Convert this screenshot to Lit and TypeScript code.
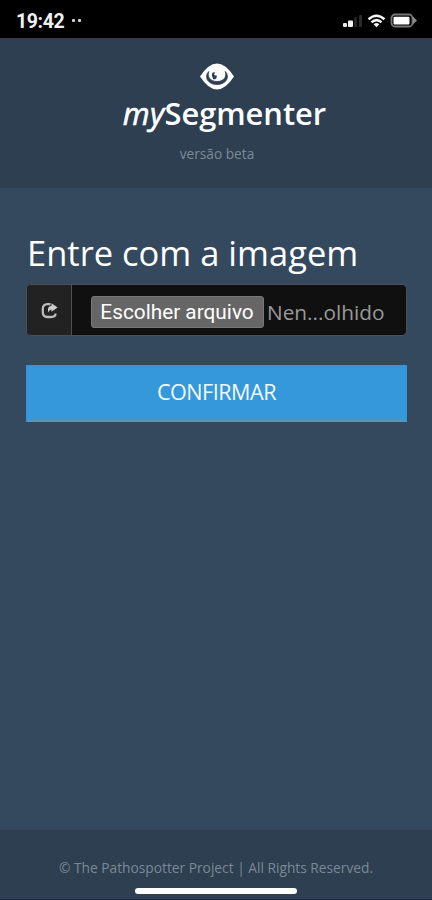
import { LitElement, html, css } from "lit";
import { customElement } from "lit/decorators.js";

@customElement("status-bar")
class StatusBar extends LitElement {
  static styles = css`
    :host {
      display: flex;
      align-items: center;
      justify-content: space-between;
      height: 38px;
      box-sizing: border-box;
      padding: 4px 15px 0 16px;
      background: #000;
      color: #f1f1f1;
    }
    .left { display: flex; align-items: center; gap: 8px; }
    .time { font: 700 19.5px/24px Roboto, sans-serif; letter-spacing: -0.4px; padding-top: 2px; }
    .dots { display: flex; gap: 3px; padding-bottom: 1px; }
    .dots i { width: 3px; height: 3px; background: #d4d4d4; border-radius: 1px; }
    svg { display: block; }
  `;
  render() {
    return html`
      <div class="left">
        <span class="time">19:42</span>
        <span class="dots"><i></i><i></i></span>
      </div>
      <svg width="75" height="16" viewBox="0 0 75 16">
        <rect x="1" y="10" width="4" height="4" rx="1" fill="#e8e8e8" />
        <rect x="6" y="7.500" width="5" height="6.500" rx="1" fill="#f4f4f4" />
        <rect x="12" y="4" width="3" height="10" rx="1" fill="#242424" />
        <rect x="17" y="2" width="3" height="12" rx="1" fill="#2c2c2c" />
        <g fill="none" stroke="#f4f4f4" stroke-width="2.500">
          <path d="M26.500 6.300Q34.500 -.7 42.500 6.300" />
          <path d="M29.500 9.300Q34.500 5 39.500 9.300" />
        </g>
        <path d="M31.600 11.200Q34.500 9 37.400 11.200L34.500 14.300Z" fill="#f4f4f4" />
        <rect x="49.500" y="1.500" width="21" height="12" rx="3.500" fill="none" stroke="#777" stroke-width="1.800" />
        <rect x="51.500" y="3.700" width="16" height="7.800" rx="1" fill="#fff" />
        <path d="M71 3.500L75 7.500L71 11.500Z" fill="#888" />
      </svg>
    `;
  }
}

@customElement("app-root")
class AppRoot extends LitElement {
  static styles = css`
    :host {
      display: flex;
      flex-direction: column;
      width: 432px;
      height: 900px;
      overflow: hidden;
      background: #34495e;
      color: #fff;
      font-family: "Open Sans", sans-serif;
    }
    * { box-sizing: border-box; }
    svg { display: block; }
    header {
      display: flex;
      flex-direction: column;
      align-items: center;
      height: 150px;
      padding-top: 25px;
      padding-left: 2px;
      background: #2e3f51;
    }
    h1 {
      margin: 4px 0 0 15px;
      font-size: 30.8px;
      line-height: 38px;
      font-weight: 600;
      white-space: nowrap;
    }
    h1 em { font-weight: 400; -webkit-text-stroke: 0.6px #fff; letter-spacing: 0.3px; }
    .version {
      margin-top: 12px;
      font-size: 13.7px;
      line-height: 20px;
      color: #7c8a97;
    }
    main { flex: 1; padding: 41px 25px 0 26px; }
    h2 {
      margin: 0;
      padding-left: 1px;
      font-size: 34.5px;
      line-height: 48px;
      font-weight: 400;
      white-space: nowrap;
    }
    .file {
      display: flex;
      height: 52px;
      margin-top: 7px;
      border: 1px solid #4c5053;
      border-radius: 5px;
      background: #101011;
      overflow: hidden;
    }
    .addon {
      display: flex;
      align-items: center;
      justify-content: center;
      width: 45px;
      border-right: 1px solid #515151;
      background: #222;
    }
    .field { display: flex; align-items: center; padding: 3px 0 0 19px; white-space: nowrap; }
    .choose {
      width: 173px;
      height: 32px;
      padding: 0 1px 0 0;
      border: 1px solid #777;
      border-radius: 3px;
      background: #666;
      color: #fff;
      font: 400 20.8px/30px Roboto, sans-serif;
      text-align: center;
    }
    .name { margin-left: 3px; font-size: 20.8px; line-height: 30px; color: #999; }
    .confirm {
      display: block;
      width: 100%;
      height: 57px;
      margin-top: 29px;
      padding: 0 0 3px;
      border: 1px solid #3494d4;
      border-bottom: 2px solid #5795bf;
      background: #3498db;
      color: #f3faff;
      font: 400 21.6px/28px "Open Sans", sans-serif;
      letter-spacing: -0.5px;
    }
    footer {
      display: flex;
      flex-direction: column;
      align-items: center;
      height: 70px;
      padding-top: 28px;
      background: #2e3f51;
      border-bottom: 1px solid #1d2a38;
      font-size: 13.75px;
      line-height: 20px;
      color: #7b8996;
      white-space: nowrap;
    }
    .home { width: 162px; height: 6px; margin-top: 10px; border-radius: 3px; background: #fff; }
  `;
  render() {
    return html`
      <status-bar></status-bar>
      <header>
        <svg width="34" height="27" viewBox="0 0 34 27">
          <path d="M0 13.500Q8.500 .5 17 .5T34 13.500Q25.500 26.500 17 26.500T0 13.500Z" fill="#fff" />
          <path d="M8.800 8.500C4 13 7 21.500 17 21.500S30 13 25.200 8.500C27 13 24.500 18.500 17 18.500S7 13 8.800 8.500Z" fill="#2e3f51" stroke="#2e3f51" stroke-width=".8" />
          <ellipse cx="14.300" cy="12.800" rx="2.300" ry="3.600" fill="#2e3f51" transform="rotate(-12 14.300 12.800)" />
          <circle cx="15.500" cy="11.300" r="1.200" fill="#fff" />
        </svg>
        <h1><em>my</em>Segmenter</h1>
        <div class="version">versão beta</div>
      </header>
      <main>
        <h2>Entre com a imagem</h2>
        <div class="file">
          <span class="addon">
            <svg width="17" height="17" viewBox="0 0 17 17">
              <path d="M9.500 2.100H6.500Q1.800 2.100 1.800 7V10Q1.800 15 6.500 15H10Q14.500 15 14.500 11.500" fill="none" stroke="#bbb" stroke-width="2.300" />
              <path d="M10.500 1.200L16.600 5.500L10.500 9.800V7.500Q8.500 7.500 7.500 10.500Q5.500 4.500 10.500 3.800Z" fill="#ccc" />
            </svg>
          </span>
          <div class="field">
            <button class="choose">Escolher arquivo</button>
            <span class="name">Nen...olhido</span>
          </div>
        </div>
        <button class="confirm">CONFIRMAR</button>
      </main>
      <footer>
        <span>© The Pathospotter Project | All Rights Reserved.</span>
        <div class="home"></div>
      </footer>
    `;
  }
}
